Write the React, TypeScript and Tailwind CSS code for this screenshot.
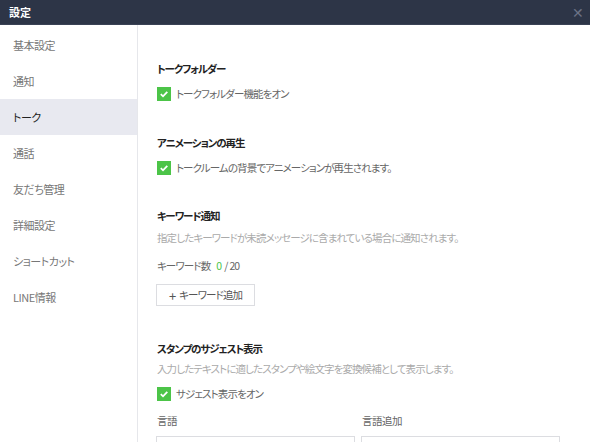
import { useState } from 'react';

const menu = ['基本設定', '通知', 'トーク', '通話', '友だち管理', '詳細設定', 'ショートカット', 'LINE情報'];

function Check({ label }: { label: string }) {
  return (
    <div className="flex items-center h-[14px]">
      <span className="w-[14px] h-[14px] bg-[#4cc448] flex items-center justify-center">
        <svg width="10" height="10" viewBox="0 0 10 10">
          <path d="M1.8 5.2 L4 7.3 L8.3 2.8" stroke="#fff" strokeWidth="1.8" fill="none" />
        </svg>
      </span>
      <span className="ml-[5px] text-[10.5px] tracking-[-0.9px] text-[#666]">{label}</span>
    </div>
  );
}

export default function App() {
  const [active, setActive] = useState('トーク');

  return (
    <div className="w-[590px] h-[442px] overflow-hidden bg-white flex flex-col font-['Noto_Sans_CJK_JP',sans-serif] [font-feature-settings:'palt']">
      {/* Title bar */}
      <div className="h-[25px] shrink-0 bg-[#2d3547] border-b border-[#3a4255] flex items-center justify-between pl-[9px] pr-[6px]">
        <span className="text-white text-[11px] font-bold">設定</span>
        <span className="text-[#6b7285] text-[14px] leading-none">✕</span>
      </div>

      <div className="flex flex-1 min-h-0">
        {/* Sidebar */}
        <div className="w-[138px] shrink-0 border-r border-[#e6e7eb] pt-[2px]">
          {menu.map((m) => (
            <div
              key={m}
              onClick={() => setActive(m)}
              className={
                m === active
                  ? 'h-[36px] flex items-center pl-[13px] text-[11px] tracking-[-0.5px] bg-[#e8e9f0] text-[#222]'
                  : 'h-[36px] flex items-center pl-[13px] text-[11px] tracking-[-0.5px] text-[#777]'
              }
            >
              {m}
            </div>
          ))}
        </div>

        {/* Content */}
        <div className="flex-1 pl-[19px] pt-[36px]">
          <div className="h-4 leading-4 text-[10.5px] tracking-[-1.1px] font-bold text-[#222]">トークフォルダー</div>
          <div className="mt-[10px]">
            <Check label="トークフォルダー機能をオン" />
          </div>

          <div className="mt-[34px] h-4 leading-4 text-[10.5px] tracking-[-1.1px] font-bold text-[#222]">アニメーションの再生</div>
          <div className="mt-[10px]">
            <Check label="トークルームの背景でアニメーションが再生されます。" />
          </div>

          <div className="mt-[33px] h-4 leading-4 text-[10.5px] tracking-[-1.1px] font-bold text-[#222]">キーワード通知</div>
          <div className="mt-[6px] h-4 leading-4 text-[10.5px] tracking-[-0.9px] text-[#aaa]">
            指定したキーワードが未読メッセージに含まれている場合に通知されます。
          </div>
          <div className="mt-[12px] h-4 leading-4 text-[10.5px] tracking-[-0.9px] text-[#666] flex items-center">
            <span>キーワード数</span>
            <span className="ml-[6px] text-[#4cc448]">0</span>
            <span className="ml-[3px]">/</span>
            <span className="ml-[2px]">20</span>
          </div>
          <button className="mt-[10px] h-[22px] w-[99px] -ml-[1px] border border-[#dcdde1] bg-white flex items-center justify-center text-[10.5px] tracking-[-0.9px] text-[#555]">
            <span className="mr-[4px] text-[13px] leading-none">+</span>キーワード追加
          </button>

          <div className="mt-[35px] h-4 leading-4 text-[10.5px] tracking-[-1.1px] font-bold text-[#222]">スタンプのサジェスト表示</div>
          <div className="mt-[4px] h-4 leading-4 text-[10.5px] tracking-[-0.9px] text-[#aaa]">
            入力したテキストに適したスタンプや絵文字を変換候補として表示します。
          </div>
          <div className="mt-[10px]">
            <Check label="サジェスト表示をオン" />
          </div>

          <div className="mt-[12px] flex gap-[6px] -ml-[1px]">
            <div className="w-[199px]">
              <div className="h-4 leading-4 pl-[1px] text-[10.5px] tracking-[-0.5px] text-[#666]">言語</div>
              <div className="mt-[7px] h-[30px] border border-[#dcdde1]" />
            </div>
            <div className="w-[199px]">
              <div className="h-4 leading-4 pl-[1px] text-[10.5px] tracking-[-0.5px] text-[#666]">言語追加</div>
              <div className="mt-[7px] h-[30px] border border-[#dcdde1]" />
            </div>
          </div>
        </div>
      </div>
    </div>
  );
}
